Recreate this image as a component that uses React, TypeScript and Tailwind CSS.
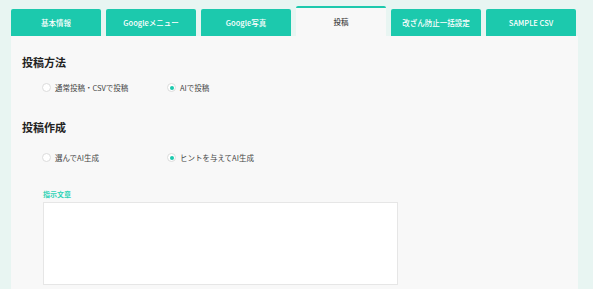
import React from "react";

const tabs = ["基本情報", "Googleメニュー", "Google写真", "投稿", "改ざん防止一括設定", "SAMPLE CSV"];

function Radio({ checked, label }: { checked?: boolean; label: string }) {
  return (
    <div className="flex items-center gap-[4px]">
      <span className="w-[9px] h-[9px] rounded-full border border-[#dcdcdc] bg-white flex items-center justify-center">
        {checked && <span className="w-[4px] h-[4px] rounded-full bg-[#1cc9ad]" />}
      </span>
      <span className="text-[7.5px] text-[#444]">{label}</span>
    </div>
  );
}

export default function App() {
  return (
    <div
      className="w-[593px] h-[289px] bg-[#e8f5f2] overflow-hidden pl-[11px] pr-[15px]"
      style={{ fontFamily: '"Noto Sans CJK JP", "Noto Sans", sans-serif' }}
    >
      <div className="flex gap-[5px] pt-[6px] items-end">
        {tabs.map((t, i) =>
          i === 3 ? (
            <div
              key={t}
              className="w-[90px] h-[30px] bg-[#f8f8f8] border-t-2 border-[#1cc9ad] rounded-t-[2px] flex items-center justify-center text-[7.5px] font-medium text-[#444]"
            >
              {t}
            </div>
          ) : (
            <div
              key={t}
              className="w-[90px] h-[27px] bg-[#1cc9ad] rounded-t-[2px] flex items-center justify-center text-[7.5px] font-medium text-white"
            >
              {t}
            </div>
          )
        )}
      </div>
      <div className="bg-[#f8f8f8] h-[260px] px-[11px] pt-[18px]">
        <h2 className="text-[11px] font-bold text-[#222] leading-[16px]">投稿方法</h2>
        <div className="flex pl-[20px] mt-[12px]">
          <div className="w-[125px]"><Radio label="通常投稿・CSVで投稿" /></div>
          <Radio checked label="AIで投稿" />
        </div>
        <h2 className="text-[11px] font-bold text-[#222] leading-[16px] mt-[26px]">投稿作成</h2>
        <div className="flex pl-[20px] mt-[17px]">
          <div className="w-[125px]"><Radio label="選んでAI生成" /></div>
          <Radio checked label="ヒントを与えてAI生成" />
        </div>
        <div className="pl-[21px] mt-[25px]">
          <div className="text-[7px] font-bold text-[#2fd3b6] leading-[10px]">指示文章</div>
          <div className="w-[355px] h-[83px] bg-white border border-[#e6e6e6] mt-[3px]" />
        </div>
      </div>
    </div>
  );
}
